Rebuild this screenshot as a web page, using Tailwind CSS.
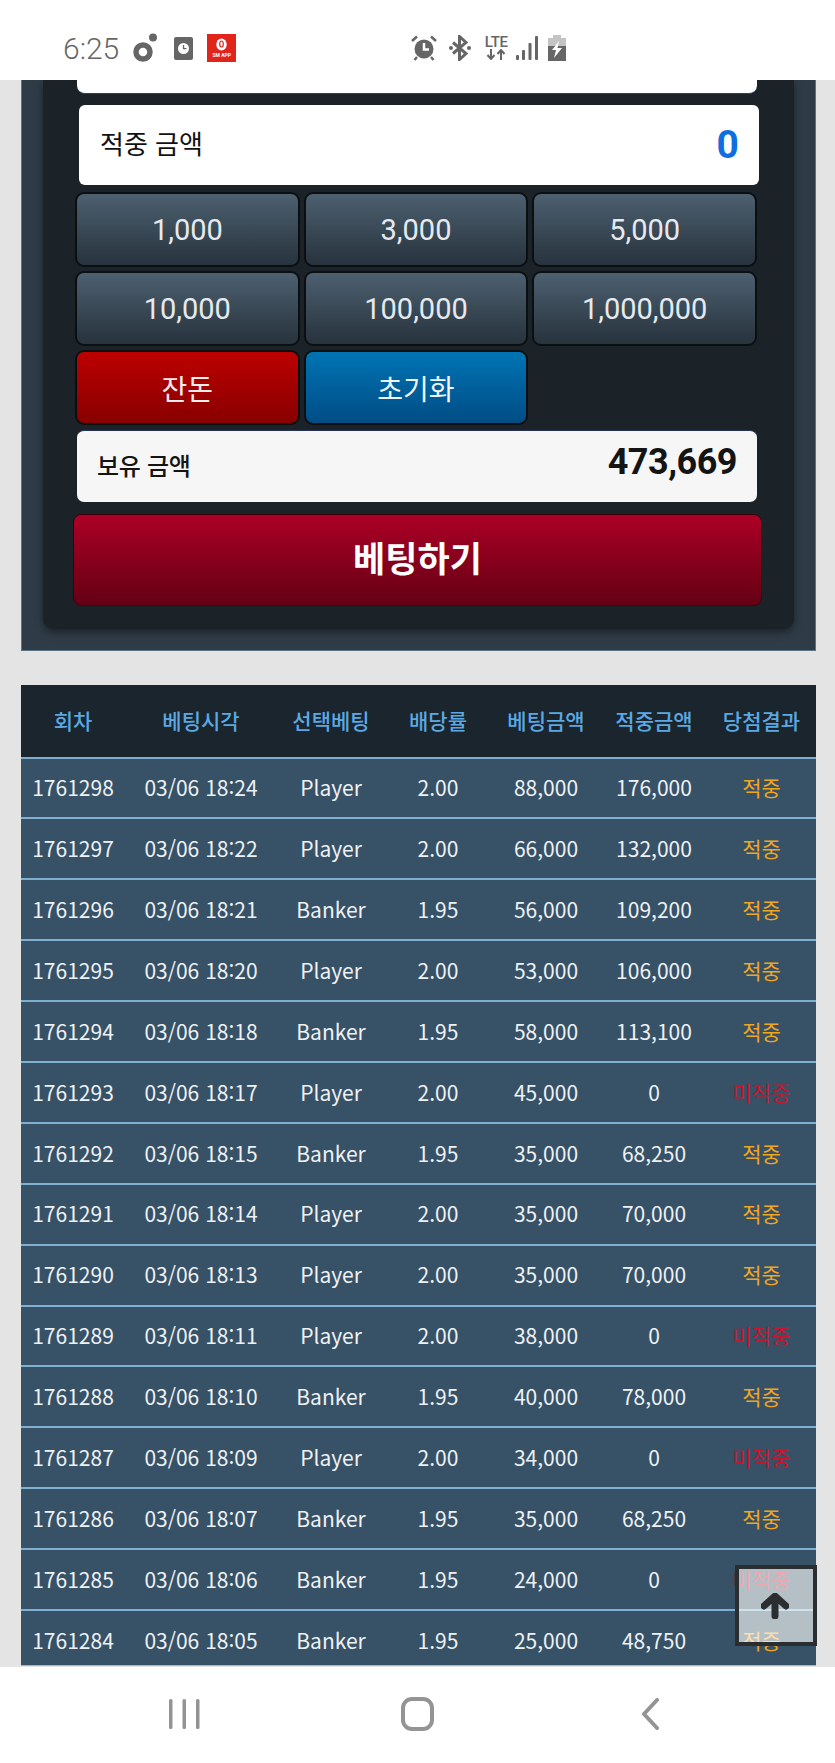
<!DOCTYPE html>
<html lang="ko">
<head>
  <meta charset="UTF-8" />
  <meta name="viewport" content="width=device-width,initial-scale=1" />
  <title>베팅</title>
  <script src="https://cdn.jsdelivr.net/npm/@tailwindcss/browser@4"></script>
</head>

<body class="bg-[#e4e4e4] font-['Roboto','Noto_Sans_CJK_KR',sans-serif]">
<div class="relative w-[835px] h-[1763px] overflow-hidden flex flex-col">

  <!-- status bar -->
  <header class="h-[80px] shrink-0 bg-white relative z-10 flex items-start">
    <div class="flex items-start ml-[63px] mt-[34px]">
      <span class="text-[30px] leading-[30px] font-light text-[#666]">6:25</span>
      <svg class="ml-[13px] mt-[-1px]" width="28" height="30" viewBox="0 0 28 30" fill="none">
        <circle cx="11" cy="19" r="7" stroke="#666" stroke-width="5.5"/>
        <circle cx="21" cy="4.500" r="4" fill="#666"/>
      </svg>
      <svg class="ml-[14px] mt-[3px]" width="19" height="23" viewBox="0 0 19 23">
        <rect width="19" height="23" rx="2" fill="#666"/>
        <circle cx="9.500" cy="11.500" r="5.500" fill="#fff"/>
        <path d="M9.500 8v3.700h3" stroke="#666" stroke-width="1.300" fill="none"/>
      </svg>
      <div class="ml-[14px] mt-0 w-[29px] h-[28px] bg-[#e1251b] flex flex-col items-center">
        <svg class="mt-[4px]" width="11" height="14" viewBox="0 0 11 14">
          <ellipse cx="5.500" cy="6.500" rx="5.200" ry="6" fill="#fff"/>
          <ellipse cx="5.500" cy="6" rx="1.800" ry="3" fill="none" stroke="#e1251b" stroke-width="1.200"/>
        </svg>
        <span class="text-[5px] leading-[6px] font-bold text-white whitespace-nowrap">SM APP</span>
      </div>
    </div>
    <div class="flex items-start ml-[175px] mt-[35px]">
      <svg width="26" height="26" viewBox="0 0 26 26" fill="#666">
        <circle cx="13" cy="14" r="9.500"/>
        <path d="M1 6 6 1.500M25 6 20 1.500M6 22l-2.500 3M20 22l2.500 3" stroke="#666" stroke-width="2.500" fill="none"/>
        <path d="M13 8v6.500h5" stroke="#fff" stroke-width="2.500" fill="none"/>
      </svg>
      <svg class="ml-[12px]" width="22" height="26" viewBox="0 0 22 26" fill="none">
        <path d="M4 7.500 17 18.500 10.500 24.500V1.500L17 7.500 4 18.500" stroke="#666" stroke-width="3"/>
        <circle cx="2" cy="13" r="2" fill="#666"/>
        <circle cx="20" cy="13" r="2" fill="#666"/>
      </svg>
      <div class="ml-[13px] w-[24px] flex flex-col items-center">
        <span class="text-[15px] leading-[14px] font-medium text-[#666] tracking-[-0.3px]">LTE</span>
        <svg width="20" height="11" viewBox="0 0 20 11" fill="none" stroke="#666" stroke-width="2">
          <path d="M5 0v9M1.500 6 5 10l3.500-4M15 11V2M11.500 5 15 1l3.500 4"/>
        </svg>
      </div>
      <svg class="ml-[8px] mt-[1px]" width="22" height="25" viewBox="0 0 22 25" fill="#666">
        <rect x="0" y="19" width="3" height="5" rx="1"/>
        <rect x="6" y="14" width="3" height="10" rx="1"/>
        <rect x="12.500" y="7" width="3" height="17" rx="1"/>
        <rect x="19" y="0" width="3" height="24" rx="1"/>
      </svg>
      <svg class="ml-[10px]" width="18" height="26" viewBox="0 0 18 26">
        <path d="M5 0h8v3h5v23H0V3h5z" fill="#c4c4c4"/>
        <path d="M0 11h18v15H0z" fill="#666"/>
        <path d="M11 6 4 15h4l-2 8 8-10H9.500z" fill="#fff"/>
      </svg>
    </div>
  </header>

  <main class="flex-1 min-h-0 overflow-hidden">
    <!-- betting panel -->
    <section class="ml-[21px] w-[795px] h-[571px] bg-[#2f3c47] border-b border-x border-[#5d7486]">
      <div class="ml-[21px] w-[751px] h-[549px] bg-[#1b2329] rounded-b-[10px] shadow-[0_3px_8px_rgba(0,0,0,0.45)] flex flex-col">
        <div class="ml-[34px] w-[680px] h-[14px] bg-white rounded-b-[8px] border-b border-[#2a3f66]"></div>

        <div class="ml-[36px] mt-[11px] w-[680px] h-[80px] bg-white rounded-[6px] flex items-center justify-between pl-[21px] pr-[20px] text-[#111]">
          <span class="text-[26px] leading-none font-['Noto_Sans_CJK_KR',sans-serif] font-normal mb-[4px]">적중 금액</span>
          <span class="text-[39px] leading-none font-bold text-[#0f6fe0]">0</span>
        </div>

        <div class="ml-[32px] mt-[7px] w-[682px] grid grid-cols-3 gap-x-[4px] gap-y-[4px] auto-rows-[75px] text-[29px] text-[#e6eaee]">
          <button class="rounded-[9px] border-2 border-[#0c0f12] bg-gradient-to-b from-[#4d6070] to-[#27333d] pt-[2px]">1,000</button>
          <button class="rounded-[9px] border-2 border-[#0c0f12] bg-gradient-to-b from-[#4d6070] to-[#27333d] pt-[2px]">3,000</button>
          <button class="rounded-[9px] border-2 border-[#0c0f12] bg-gradient-to-b from-[#4d6070] to-[#27333d] pt-[2px]">5,000</button>
          <button class="rounded-[9px] border-2 border-[#0c0f12] bg-gradient-to-b from-[#4d6070] to-[#27333d] pt-[2px]">10,000</button>
          <button class="rounded-[9px] border-2 border-[#0c0f12] bg-gradient-to-b from-[#4d6070] to-[#27333d] pt-[2px]">100,000</button>
          <button class="rounded-[9px] border-2 border-[#0c0f12] bg-gradient-to-b from-[#4d6070] to-[#27333d] pt-[2px]">1,000,000</button>
          <button class="rounded-[9px] border-2 border-[#0c0f12] bg-gradient-to-b from-[#bd0000] to-[#880000] text-[28px] text-[#f3eeee] font-['Noto_Sans_CJK_KR',sans-serif]">잔돈</button>
          <button class="rounded-[9px] border-2 border-[#0c0f12] bg-gradient-to-b from-[#0074b4] to-[#004d85] text-[28px] text-[#f0f4f8] font-['Noto_Sans_CJK_KR',sans-serif]">초기화</button>
        </div>

        <div class="ml-[34px] mt-[5px] w-[680px] h-[72px] bg-[#f6f6f6] rounded-[7px] border-t border-[#26345c] flex items-center justify-between pl-[20px] pr-[20px] text-[#141414]">
          <span class="text-[24px] leading-none font-medium tracking-[-0.3px] font-['Noto_Sans_CJK_KR',sans-serif] mb-[3px]">보유 금액</span>
          <span class="text-[36px] leading-none font-bold tracking-[-0.5px] mb-[10px]">473,669</span>
        </div>

        <button class="ml-[30px] mt-[12px] w-[689px] h-[92px] rounded-[8px] border border-[#3d0008] bg-gradient-to-b from-[#ad0026] to-[#640014] text-[35px] font-bold text-white font-['Noto_Sans_CJK_KR',sans-serif] pb-[6px]">베팅하기</button>
      </div>
    </section>

    <!-- history table -->
    <div class="ml-[21px] mt-[34px] w-[795px] h-[981px] overflow-hidden bg-[#375166] border-b border-[#9db6c8]">
      <table class="w-[795px] table-fixed border-collapse font-['Noto_Sans_CJK_KR',sans-serif] text-center text-[21px]">
        <colgroup>
          <col class="w-[104px]"><col class="w-[152px]"><col class="w-[108px]"><col class="w-[106px]"><col class="w-[110px]"><col class="w-[106px]"><col class="w-[109px]">
        </colgroup>
        <thead>
          <tr class="h-[72.5px] bg-[#1a252e] text-[#5aa9e4]">
            <th class="font-medium">회차</th>
            <th class="font-medium">베팅시각</th>
            <th class="font-medium">선택베팅</th>
            <th class="font-medium">배당률</th>
            <th class="font-medium">베팅금액</th>
            <th class="font-medium">적중금액</th>
            <th class="font-medium">당첨결과</th>
          </tr>
        </thead>
        <tbody id="rows" class="text-[#eef2f5]"></tbody>
      </table>
    </div>
  </main>

  <!-- nav bar -->
  <nav class="h-[96px] shrink-0 bg-white relative z-10">
    <div class="flex items-center h-[96px] pb-[2px]">
      <svg class="ml-[169px]" width="31" height="32" viewBox="0 0 31 32" fill="#949494">
        <rect x="0" y="1" width="3.500" height="30" rx="1.500"/>
        <rect x="13.500" y="1" width="3.500" height="30" rx="1.500"/>
        <rect x="27" y="1" width="3.500" height="30" rx="1.500"/>
      </svg>
      <svg class="ml-[201px]" width="34" height="34" viewBox="0 0 34 34" fill="none">
        <rect x="2" y="2" width="29" height="30" rx="9" stroke="#949494" stroke-width="4"/>
      </svg>
      <svg class="ml-[206px]" width="18" height="32" viewBox="0 0 18 32" fill="none">
        <path d="M16 2 3 16l13 14" stroke="#949494" stroke-width="4" stroke-linecap="round" stroke-linejoin="round"/>
      </svg>
    </div>
  </nav>

  <!-- scroll to top -->
  <button class="absolute left-[735px] top-[1565px] w-[82px] h-[81px] border-4 border-[#2b2e30] bg-white/63 flex items-center justify-center">
    <svg width="28" height="26" viewBox="0 0 28 26" fill="none" class="mt-[1px] ml-[-3px]">
      <path d="M3 13 14 3l11 10M14 4v19" stroke="#2b2e30" stroke-width="7" stroke-linejoin="round" stroke-linecap="round"/>
    </svg>
  </button>
</div>

<script>
const BETS = [
  ["1761298","03/06 18:24","Player","2.00","88,000","176,000",true],
  ["1761297","03/06 18:22","Player","2.00","66,000","132,000",true],
  ["1761296","03/06 18:21","Banker","1.95","56,000","109,200",true],
  ["1761295","03/06 18:20","Player","2.00","53,000","106,000",true],
  ["1761294","03/06 18:18","Banker","1.95","58,000","113,100",true],
  ["1761293","03/06 18:17","Player","2.00","45,000","0",false],
  ["1761292","03/06 18:15","Banker","1.95","35,000","68,250",true],
  ["1761291","03/06 18:14","Player","2.00","35,000","70,000",true],
  ["1761290","03/06 18:13","Player","2.00","35,000","70,000",true],
  ["1761289","03/06 18:11","Player","2.00","38,000","0",false],
  ["1761288","03/06 18:10","Banker","1.95","40,000","78,000",true],
  ["1761287","03/06 18:09","Player","2.00","34,000","0",false],
  ["1761286","03/06 18:07","Banker","1.95","35,000","68,250",true],
  ["1761285","03/06 18:06","Banker","1.95","24,000","0",false],
  ["1761284","03/06 18:05","Banker","1.95","25,000","48,750",true],
];

document.getElementById("rows").innerHTML = BETS.map(b => `
  <tr class="h-[60.9px] border-t-2 border-[#7fb0d2]">
    <td>${b[0]}</td><td>${b[1]}</td><td>${b[2]}</td><td>${b[3]}</td><td>${b[4]}</td><td>${b[5]}</td>
    <td class="${b[6] ? "text-[#f0a61e]" : "text-[#c8142c]"}">${b[6] ? "적중" : "미적중"}</td>
  </tr>`).join("");
</script>
</body>
</html>
